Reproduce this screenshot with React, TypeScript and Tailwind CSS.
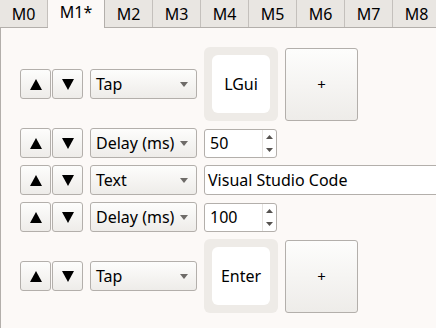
import React from 'react';

const tabs = ['M0', 'M1*', 'M2', 'M3', 'M4', 'M5', 'M6', 'M7', 'M8'];

const ArrowButtons: React.FC = () => (
  <div className="flex shrink-0 gap-[1px]">
    {['up', 'down'].map((d) => (
      <button
        key={d}
        className="flex h-[30px] w-[31px] items-center justify-center rounded-[3px] border border-[#b3afab] bg-gradient-to-b from-[#fdfdfc] to-[#eeece9]"
      >
        <svg width="12" height="11" viewBox="0 0 12 11">
          {d === 'up' ? <polygon points="6,0 12,11 0,11" fill="#000" /> : <polygon points="0,0 12,0 6,11" fill="#000" />}
        </svg>
      </button>
    ))}
  </div>
);

const Combo: React.FC<{ label: string }> = ({ label }) => (
  <div className="flex h-[30px] w-[107px] shrink-0 items-center justify-between rounded-[3px] border border-[#b3afab] bg-gradient-to-b from-[#fdfdfc] to-[#eeece9] pl-[5px] pr-[8px]">
    <span>{label}</span>
    <svg width="8" height="5" viewBox="0 0 8 5">
      <polygon points="0,0 8,0 4,5" fill="#6e6b68" />
    </svg>
  </div>
);

const SpinBox: React.FC<{ value: string }> = ({ value }) => (
  <div className="flex h-[29px] w-[73px] shrink-0 items-stretch rounded-[3px] border border-[#b3afab] bg-white">
    <span className="flex flex-1 items-center pl-[5px]">{value}</span>
    <div className="flex w-[14px] flex-col items-center justify-between border-l border-[#e6e3e0] py-[5px]">
      <svg width="7" height="4" viewBox="0 0 7 4">
        <polygon points="3.5,0 7,4 0,4" fill="#55524f" />
      </svg>
      <svg width="7" height="4" viewBox="0 0 7 4">
        <polygon points="0,0 7,0 3.5,4" fill="#55524f" />
      </svg>
    </div>
  </div>
);

const KeyRow: React.FC<{ keyName: string }> = ({ keyName }) => (
  <div className="flex items-center gap-[7px]">
    <ArrowButtons />
    <Combo label="Tap" />
    <div className="flex h-[74px] w-[74px] shrink-0 items-center justify-center rounded-[6px] bg-[#eeebe7]">
      <div className="flex h-[58px] w-[58px] items-center justify-center rounded-[6px] bg-white">{keyName}</div>
    </div>
    <button className="flex h-[73px] w-[73px] shrink-0 items-center justify-center rounded-[3px] border border-[#b3afab] bg-gradient-to-b from-[#fdfdfc] to-[#eeece9] text-[15px]">
      +
    </button>
  </div>
);

export default function App() {
  return (
    <div
      className="flex h-[328px] w-[436px] flex-col overflow-hidden bg-[#fcf9f7] text-[16px] text-black"
      style={{ fontFamily: '"Noto Sans", "Open Sans", sans-serif' }}
    >
      <div className="flex h-[28px] shrink-0 border-b border-[#b3afab] bg-[#fcf9f7]">
        {tabs.map((t, i) => (
          <div
            key={t}
            className={
              i === 1
                ? 'relative -mb-[1px] flex w-[57px] shrink-0 items-center justify-center border-r border-[#b3afab] bg-[#fcf9f7] pb-[5px]'
                : 'flex w-[48px] shrink-0 items-center justify-center border-r border-[#c4c0bc] bg-[#e9e6e2] pt-[1px]'
            }
          >
            {t}
          </div>
        ))}
      </div>
      <div className="flex flex-1 flex-col gap-[7px] border-l border-[#b3afab] pl-[19px] pt-[19px]">
        <KeyRow keyName="LGui" />
        <div className="flex items-center gap-[7px]">
          <ArrowButtons />
          <Combo label="Delay (ms)" />
          <SpinBox value="50" />
        </div>
        <div className="flex items-center gap-[7px]">
          <ArrowButtons />
          <Combo label="Text" />
          <div className="flex h-[30px] w-[260px] shrink-0 items-center rounded-[3px] border border-[#b3afab] bg-white pl-[3px]">
            Visual Studio Code
          </div>
        </div>
        <div className="flex items-center gap-[7px]">
          <ArrowButtons />
          <Combo label="Delay (ms)" />
          <SpinBox value="100" />
        </div>
        <KeyRow keyName="Enter" />
      </div>
    </div>
  );
}
